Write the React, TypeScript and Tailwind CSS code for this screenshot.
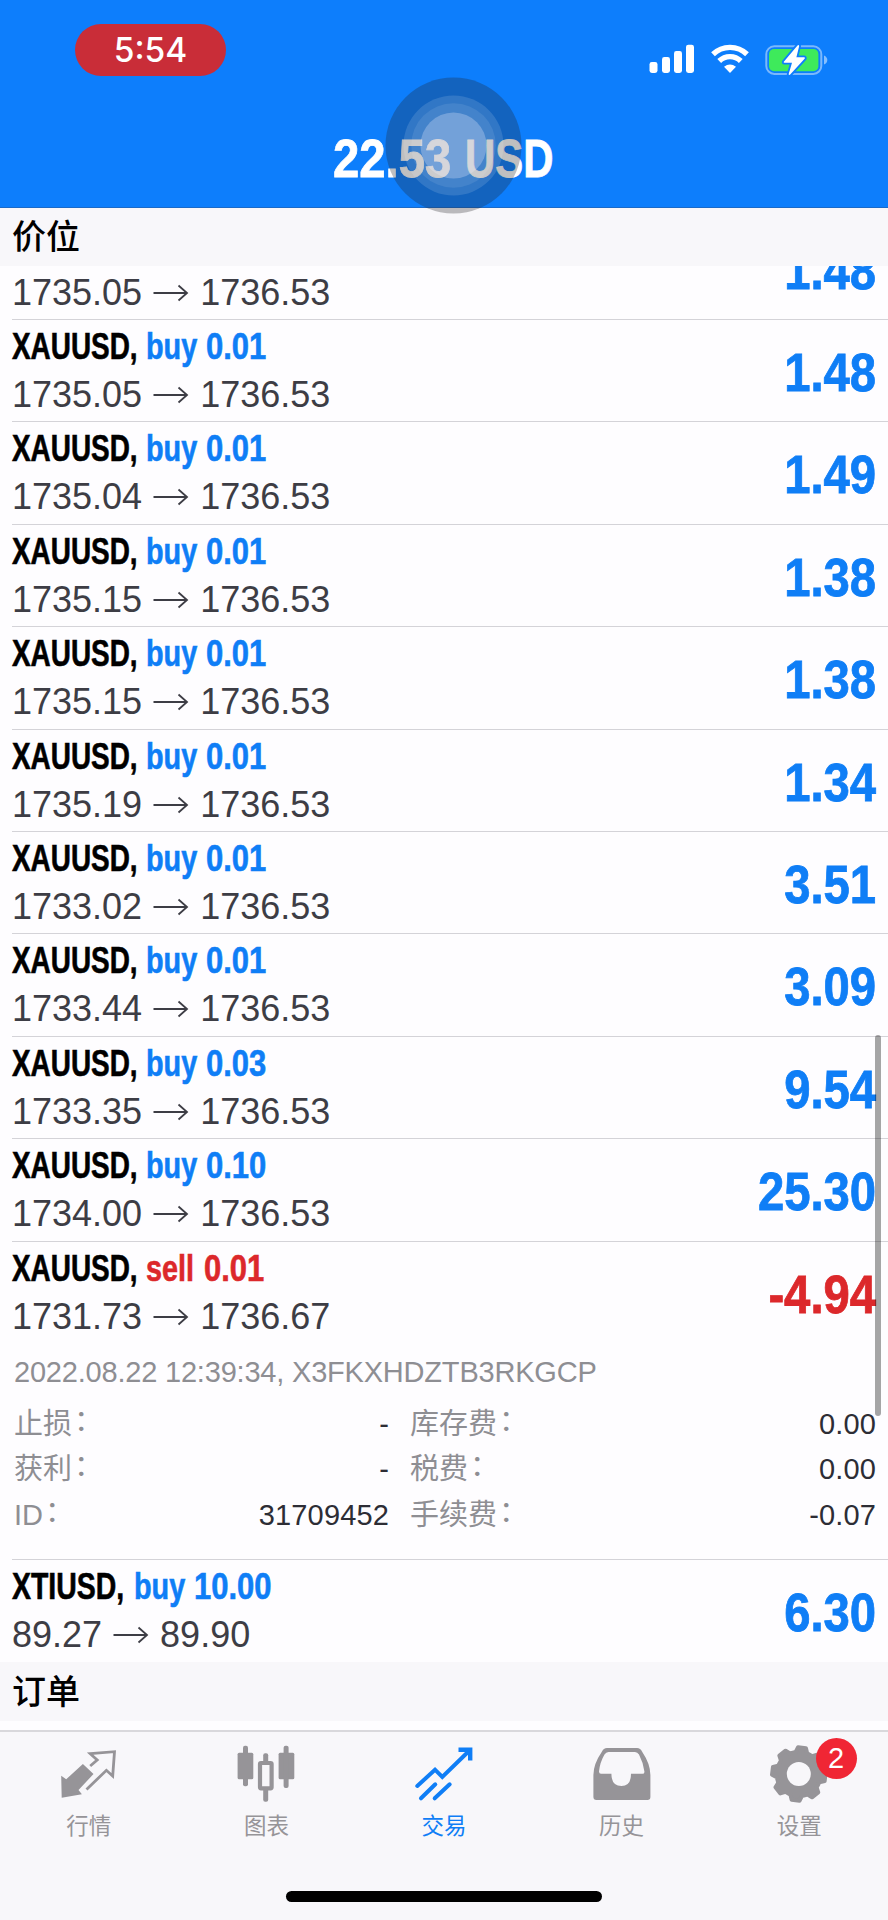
import type { ReactNode } from 'react';
import clsx from 'clsx';

interface Position {
    symbol: string;
    side: 'buy' | 'sell';
    volume: string;
    open: string;
    current: string;
    profit: string;
}

const positions: Position[] = [
    { symbol: 'XAUUSD', side: 'buy', volume: '0.01', open: '1735.05', current: '1736.53', profit: '1.48' },
    { symbol: 'XAUUSD', side: 'buy', volume: '0.01', open: '1735.05', current: '1736.53', profit: '1.48' },
    { symbol: 'XAUUSD', side: 'buy', volume: '0.01', open: '1735.04', current: '1736.53', profit: '1.49' },
    { symbol: 'XAUUSD', side: 'buy', volume: '0.01', open: '1735.15', current: '1736.53', profit: '1.38' },
    { symbol: 'XAUUSD', side: 'buy', volume: '0.01', open: '1735.15', current: '1736.53', profit: '1.38' },
    { symbol: 'XAUUSD', side: 'buy', volume: '0.01', open: '1735.19', current: '1736.53', profit: '1.34' },
    { symbol: 'XAUUSD', side: 'buy', volume: '0.01', open: '1733.02', current: '1736.53', profit: '3.51' },
    { symbol: 'XAUUSD', side: 'buy', volume: '0.01', open: '1733.44', current: '1736.53', profit: '3.09' },
    { symbol: 'XAUUSD', side: 'buy', volume: '0.03', open: '1733.35', current: '1736.53', profit: '9.54' },
    { symbol: 'XAUUSD', side: 'buy', volume: '0.10', open: '1734.00', current: '1736.53', profit: '25.30' },
];

const expanded: Position = {
    symbol: 'XAUUSD', side: 'sell', volume: '0.01', open: '1731.73', current: '1736.67', profit: '-4.94',
};

const last: Position = {
    symbol: 'XTIUSD', side: 'buy', volume: '10.00', open: '89.27', current: '89.90', profit: '6.30',
};

const details = [
    { label: '止损', value: '-', label2: '库存费', value2: '0.00' },
    { label: '获利', value: '-', label2: '税费', value2: '0.00' },
    { label: 'ID', value: '31709452', label2: '手续费', value2: '-0.07' },
];

const StatusIcons = () => (
    <div className="flex items-start">
        <svg width="46" height="30" viewBox="0 0 46 30" fill="#fff">
            <rect x="0.5" y="18" width="8" height="11" rx="2.4" />
            <rect x="13" y="13" width="8" height="16" rx="2.4" />
            <rect x="25" y="7" width="8" height="22" rx="2.4" />
            <rect x="37" y="0.7" width="8" height="28.3" rx="2.4" />
        </svg>
        <svg className="ml-[15px]" width="40" height="30" viewBox="0 0 40 30" fill="none">
            <path d="M3 10.2 A24.5 24.5 0 0 1 37 10.2" stroke="#fff" strokeWidth="5.4" />
            <path d="M9.2 17 A15.5 15.5 0 0 1 30.8 17" stroke="#fff" strokeWidth="5.4" />
            <path d="M20 29 L14 22.8 Q20 18 26 22.8 Z" fill="#fff" />
        </svg>
        <svg className="ml-[15px]" width="64" height="34" viewBox="0 -1 64 34" fill="none">
            <rect x="1.3" y="1.3" width="55" height="27.6" rx="8" stroke="#fff" strokeOpacity="0.45" strokeWidth="2" />
            <path d="M59 10.5 Q62.3 12 62.3 15 Q62.3 18 59 19.5 Z" fill="#fff" fillOpacity="0.5" />
            <rect x="4" y="4" width="49.4" height="22.2" rx="5" fill="#3eea5b" />
            <path
                d="M32.5 0.5 L18.8 16.8 Q18.4 17.8 19.4 17.8 H27 L23.6 29.2 Q24 30.6 25.2 29.6 L39.8 13.6 Q40.2 12.2 39 12.2 H31.4 L34.2 1 Q33.8 -0.6 32.5 0.5 Z"
                fill="#fff"
                stroke="#0d7efc"
                strokeWidth="3.6"
                paintOrder="stroke"
            />
        </svg>
    </div>
);

const AssistiveTouch = () => (
    <svg className="absolute left-[385px] top-[77px]" width="137" height="137" viewBox="-68.5 -68.5 137 137">
        <circle r="68" fill="#222226" fillOpacity="0.29" />
        <circle r="50" fill="#fff" fillOpacity="0.13" />
        <circle r="42.3" fill="#fff" fillOpacity="0.09" />
        <circle r="33" fill="#f0f0ff" fillOpacity="0.28" />
    </svg>
);

const Header = () => (
    <header className="relative z-10 h-[207.5px] shrink-0 border-b border-[#1a6ac8] bg-[#0d7efc]">
        <div className="flex items-start justify-between pt-6 pr-[59px] pl-[75px]">
            <div className="flex h-[52px] w-[151px] items-center justify-center rounded-full bg-[#c92d38] pt-px font-['Inter',sans-serif] text-[33.5px] font-medium text-white">
                5:54
            </div>
            <div className="pt-5">
                <StatusIcons />
            </div>
        </div>
        <div className="mt-[54px] ml-[332.5px] flex h-[53px] text-[54px] leading-[53px] font-bold whitespace-nowrap text-white [-webkit-text-stroke:0.8px]">
            <span className="w-[132px] origin-left scale-x-[0.875]">22.53</span>
            <span className="w-[90px] origin-left scale-x-[0.775]">USD</span>
        </div>
        <AssistiveTouch />
    </header>
);

const SectionHeader = ({ children }: { children: ReactNode }) => (
    <div className="flex h-[58.7px] shrink-0 items-center bg-[#f8f7fa] pb-[3px] pl-3 font-['Noto_Sans_CJK_SC',sans-serif] text-[34px] leading-none font-medium text-black">
        {children}
    </div>
);

const Arrow = () => (
    <svg width="58" height="36" viewBox="0 0 58 36" fill="none" stroke="#3d3d45" strokeWidth="1.8">
        <path d="M11.5 18 H45 M36.5 10.5 L45 18 L36.5 25.5" />
    </svg>
);

const PositionTitle = ({ symbol, side, volume, tone }: { symbol: string; side: string; volume: string; tone: string }) => (
    <div className="flex h-9 font-bold [-webkit-text-stroke:0.6px]">
        <span className={clsx('origin-left text-black', symbol === 'XTIUSD' ? 'w-[121.5px] scale-x-[0.79]' : 'w-[133.5px] scale-x-[0.775]')}>
            {symbol},
        </span>
        <span className={clsx('origin-left scale-x-[0.8]', tone, side === 'buy' ? 'w-[60.5px]' : 'w-[58.5px]')}>{side}</span>
        <span className={clsx('origin-left scale-x-[0.86]', tone)}>{volume}</span>
    </div>
);

const PositionSummary = ({ position, titleHidden }: { position: Position; titleHidden?: boolean }) => {
    const { symbol, side, volume, open, current, profit } = position;
    const tone = side === 'buy' ? 'text-[#0f7ef6]' : 'text-[#dc282b]';

    return (
        <div className="flex h-[101.4px] justify-between pr-[11.5px]">
            <div className="pt-[9px] text-[36px] leading-none whitespace-nowrap">
                {titleHidden ? <div className="h-9" /> : <PositionTitle symbol={symbol} side={side} volume={volume} tone={tone} />}
                <div className="mt-3 flex h-9 text-[#3d3d45]">
                    <span>{open}</span>
                    <Arrow />
                    <span>{current}</span>
                </div>
            </div>
            <span className={clsx('flex origin-right scale-x-[0.875] pt-[26px] text-[54px] leading-[53px] font-bold [-webkit-text-stroke:0.8px]', tone)}>
                {profit}
            </span>
        </div>
    );
};

const DetailLabel = ({ children }: { children: ReactNode }) => (
    <span className="font-['Liberation_Sans','Noto_Sans_CJK_SC',sans-serif]">
        {children}
        <span className="inline-block translate-x-0.5 -translate-y-[3px]">：</span>
    </span>
);

const PositionDetails = () => (
    <div className="h-[216px] pt-[15px] pr-3 pl-0.5 text-[29px] leading-none text-[#8e8e93]">
        <div className="h-[52px] tracking-[-0.2px]">2022.08.22 12:39:34, X3FKXHDZTB3RKGCP</div>
        <div className="grid grid-cols-[375px_1fr] gap-x-[21px]">
            {details.map((row) => (
                <div key={row.label} className="contents">
                    <div className="flex h-[45.4px] justify-between">
                        <DetailLabel>{row.label}</DetailLabel>
                        <span className="tracking-[0.15px] text-[#2d2d35]">{row.value}</span>
                    </div>
                    <div className="flex h-[45.4px] justify-between">
                        <DetailLabel>{row.label2}</DetailLabel>
                        <span className="tracking-[0.15px] text-[#2d2d35]">{row.value2}</span>
                    </div>
                </div>
            ))}
        </div>
    </div>
);

const QuotesIcon = () => (
    <svg width="60" height="60" viewBox="0 0 60 60" fill="none">
        <path d="M2.2 31.7 L7.2 35.3 L23.9 20 L34.5 30 L19.5 46 L22.9 50.3 L2.7 53.7 Z" fill="currentColor" />
        <path d="M31.2 22 L38.2 16 L31.2 9.7 L55.5 7.7 L53.7 32 L47.4 26.3 L27.5 45.5" stroke="currentColor" strokeWidth="2.8" />
    </svg>
);

const ChartIcon = () => (
    <svg width="60" height="60" viewBox="0 0 60 60" fill="currentColor">
        <rect x="1.6" y="8.7" width="15.7" height="26.5" rx="1.5" />
        <rect x="7" y="1.7" width="5" height="40.5" rx="2" />
        <rect x="24" y="19" width="11.6" height="25.3" rx="1" fill="none" stroke="currentColor" strokeWidth="4.2" />
        <rect x="27.2" y="9.3" width="5" height="9.5" rx="2" />
        <rect x="27.2" y="44" width="5" height="13.7" rx="2" />
        <rect x="42.6" y="8.7" width="15.7" height="26.5" rx="1.5" />
        <rect x="47.6" y="1.7" width="5" height="42.3" rx="2" />
    </svg>
);

const TradeIcon = () => (
    <svg width="60" height="60" viewBox="0 0 60 60" fill="none" stroke="currentColor" strokeWidth="4" strokeLinecap="round">
        <path d="M3.3 42 L21 25.7 L28.3 33 L56 6" />
        <path d="M44.5 5.8 H56.2 V16.5" strokeLinecap="butt" strokeWidth="4.4" />
        <path d="M7 54.3 L21.3 40.3 M20.7 54.3 L35.7 40.3" />
    </svg>
);

const HistoryIcon = () => (
    <svg width="60" height="60" viewBox="0 0 60 60" fill="currentColor" fillRule="evenodd">
        <path d="M15 4 H45 Q48.5 4 50 7.5 Q58.4 20 58.4 31 V53 Q58.4 56 55.4 56 H4.4 Q1.4 56 1.4 53 V31 Q1.4 20 10 7.5 Q11.5 4 15 4 Z M16.5 8 Q14 8 12.5 10.5 Q8 18 7 27.5 Q7 29.8 9 29.8 H19.4 Q19.4 42 29.5 42 Q39 42 39 29.8 H50.5 Q52.6 29.8 52.4 27.5 Q51 18 47 10.5 Q45.5 8 43 8 Z" />
    </svg>
);

// eight-toothed cog, turned slightly clockwise
const cogPoints = Array.from({ length: 8 }, (_, i) =>
    [[-15, 22.3], [-8.5, 26.8], [8.5, 26.8], [15, 22.3]].map(([offset, radius]) => {
        const angle = ((i * 45 + 7 + offset) * Math.PI) / 180;
        return `${(29.8 + radius * Math.sin(angle)).toFixed(2)},${(30 - radius * Math.cos(angle)).toFixed(2)}`;
    }).join(' ')
).join(' ');

const SettingsIcon = () => (
    <svg width="60" height="60" viewBox="0 0 60 60">
        <polygon points={cogPoints} fill="currentColor" stroke="currentColor" strokeWidth="4" strokeLinejoin="round" />
        <circle cx="29.8" cy="30" r="12" fill="#f8f7fa" />
    </svg>
);

const tabs = [
    { label: '行情', icon: <QuotesIcon /> },
    { label: '图表', icon: <ChartIcon /> },
    { label: '交易', icon: <TradeIcon />, active: true },
    { label: '历史', icon: <HistoryIcon /> },
    { label: '设置', icon: <SettingsIcon />, badge: 2 },
];

const TabBar = () => (
    <nav className="flex h-[190px] shrink-0 flex-col items-center border-t-2 border-[#d9d8dc] bg-[#f8f7fa]">
        <div className="grid w-full grid-cols-5 pt-3">
            {tabs.map((tab) => (
                <div key={tab.label} className={clsx('flex flex-col items-center', tab.active ? 'text-[#0f7ef6]' : 'text-[#969498]')}>
                    <div className="relative">
                        {tab.icon}
                        {tab.badge && (
                            <span className="absolute -top-1.5 left-[46.5px] flex size-[41px] items-center justify-center rounded-full bg-[#f02634] text-[29px] leading-none text-white">
                                {tab.badge}
                            </span>
                        )}
                    </div>
                    <span className="mt-[9px] font-['Noto_Sans_CJK_SC',sans-serif] text-[22.5px] leading-[23px]">{tab.label}</span>
                </div>
            ))}
        </div>
        <div className="mt-[55px] h-[11px] w-[316px] rounded-full bg-black" />
    </nav>
);

const App = () => {
    return (
        <div className="flex h-[1920px] w-[888px] flex-col overflow-hidden bg-[#fefdff] font-['Liberation_Sans',Arial,sans-serif]">
            <Header />
            <SectionHeader>价位</SectionHeader>
            <main className="relative flex-1 overflow-hidden">
                <div className="-mt-[48.5px]">
                    {positions.map((position, index) => (
                        <div key={index} className="ml-3 border-b border-[#d4d3d8]">
                            <PositionSummary position={position} titleHidden={index === 0} />
                        </div>
                    ))}
                    <div className="ml-3 border-b border-[#d4d3d8]">
                        <PositionSummary position={expanded} />
                        <PositionDetails />
                    </div>
                    <div className="ml-3 pb-px">
                        <PositionSummary position={last} />
                    </div>
                    <SectionHeader>订单</SectionHeader>
                </div>
                {/* Scroll indicator */}
                <div className="absolute top-[769px] right-[7px] h-[381px] w-1.5 rounded-full bg-black/35" />
            </main>
            <TabBar />
        </div>
    );
};

export default App;
